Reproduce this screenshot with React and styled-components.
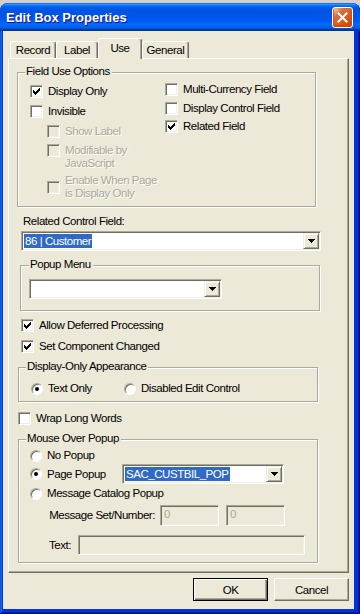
import styled, { createGlobalStyle } from 'styled-components';

const GlobalStyle = createGlobalStyle`
  html, body {
    margin: 0;
    padding: 0;
  }
  body {
    background: #d4d0c8;
    font-family: "Liberation Sans", Arial, sans-serif;
    font-size: 11.5px;
    letter-spacing: -0.45px;
    color: #000;
  }
`;

const TABS = [
  { name: 'Record', width: 46 },
  { name: 'Label', width: 42 },
  { name: 'Use', width: 44, active: true },
  { name: 'General', width: 47 },
];

function CheckMark() {
  return (
    <svg width="7" height="7" viewBox="0 0 7 7" shapeRendering="crispEdges">
      <path
        fill="#000"
        d="M0 2h1v3H0z M1 3h1v3H1z M2 4h1v3H2z M3 3h1v3H3z M4 2h1v3H4z M5 1h1v3H5z M6 0h1v3H6z"
      />
    </svg>
  );
}

function Arrow() {
  return (
    <svg width="7" height="4" viewBox="0 0 7 4" shapeRendering="crispEdges">
      <path fill="#000" d="M0 0h7v1H0z M1 1h5v1H1z M2 2h3v1H2z M3 3h1v1H3z" />
    </svg>
  );
}

function Check({ children, checked, disabled, mt = 0, ml = 0, align = 'center' }) {
  return (
    <CheckRow $mt={mt} $ml={ml} $align={align}>
      <Box $disabled={disabled}>{checked && <CheckMark />}</Box>
      <Caption $disabled={disabled}>{children}</Caption>
    </CheckRow>
  );
}

function Option({ children, selected, width, mt = 0 }) {
  return (
    <OptionRow $mt={mt} $w={width}>
      <RadioDot>{selected && <Dot />}</RadioDot>
      <Caption>{children}</Caption>
    </OptionRow>
  );
}

function Combo({ value, width }) {
  return (
    <ComboBox $w={width}>
      <ComboValue>{value && <Selected>{value}</Selected>}</ComboValue>
      <DropButton>
        <Arrow />
      </DropButton>
    </ComboBox>
  );
}

export default function App() {
  return (
    <>
      <GlobalStyle />
      <Frame>
        <TitleBar>
          <Title>Edit Box Properties</Title>
          <CloseButton>
            <svg width="11" height="11" viewBox="0 0 11 11">
              <path d="M1.5 1.5l8 8M9.5 1.5l-8 8" stroke="#fff" strokeWidth="2" strokeLinecap="square" />
            </svg>
          </CloseButton>
        </TitleBar>

        <Client>
          <TabRow>
            {TABS.map(tab => (
              <Tab key={tab.name} $w={tab.width} $active={tab.active}>
                {tab.name}
              </Tab>
            ))}
          </TabRow>

          <Panel>
            <Group $w={299} $h={135}>
              <Legend>Field Use Options</Legend>
              <GroupBody $pt={12} $pl={12}>
                <Column $w={135}>
                  <Check checked>Display Only</Check>
                  <Check mt={7}>Invisible</Check>
                  <Check disabled mt={7} ml={17}>Show Label</Check>
                  <Check disabled mt={6} ml={17} align="flex-start">
                    Modifiable by<br />JavaScript
                  </Check>
                  <Check disabled mt={4} ml={17}>
                    Enable When Page<br />is Display Only
                  </Check>
                </Column>
                <Column $mt={-2}>
                  <Check>Multi-Currency Field</Check>
                  <Check mt={6}>Display Control Field</Check>
                  <Check checked mt={5}>Related Field</Check>
                </Column>
              </GroupBody>
            </Group>

            <FieldLabel>Related Control Field:</FieldLabel>
            <ComboSlot $mt={3} $ml={4}>
              <Combo value="86 | Customer" width={300} />
            </ComboSlot>

            <Group $w={300} $h={46} $mt={14} $ml={3}>
              <Legend $x={8}>Popup Menu</Legend>
              <GroupBody $pt={13} $pl={8}>
                <Combo width={193} />
              </GroupBody>
            </Group>

            <Check checked mt={8} ml={4}>Allow Deferred Processing</Check>
            <Check checked mt={8} ml={4}>Set Component Changed</Check>

            <Group $w={300} $h={35} $mt={14} $ml={1}>
              <Legend>Display-Only Appearance</Legend>
              <GroupBody $pt={14} $pl={12}>
                <Option selected width={93}>Text Only</Option>
                <Option>Disabled Edit Control</Option>
              </GroupBody>
            </Group>

            <Check mt={10} ml={1}>Wrap Long Words</Check>

            <Group $w={300} $h={124} $mt={14} $ml={1}>
              <Legend>Mouse Over Popup</Legend>
              <GroupBody $pt={9} $pl={11} $column>
                <Option>No Popup</Option>
                <PopupRow>
                  <Option selected width={92}>Page Popup</Option>
                  <Combo value="SAC_CUSTBIL_POP" width={162} />
                </PopupRow>
                <Option mt={3}>Message Catalog Popup</Option>
                <InputRow $mt={5}>
                  <InputLabel $w={130} $right>Message Set/Number:</InputLabel>
                  <TextInput $w={59} $h={21}>0</TextInput>
                  <TextInput $w={59} $h={21} $ml={7}>0</TextInput>
                </InputRow>
                <InputRow $mt={9}>
                  <InputLabel $w={29} $ml={19}>Text:</InputLabel>
                  <TextInput $w={227} $h={20} />
                </InputRow>
              </GroupBody>
            </Group>
          </Panel>

          <ButtonRow>
            <PushButton $default>OK</PushButton>
            <PushButton>Cancel</PushButton>
          </ButtonRow>
        </Client>
      </Frame>
    </>
  );
}

const Frame = styled.div`
  margin-top: 3px;
  width: 360px;
  height: 611px;
  box-sizing: border-box;
  display: flex;
  flex-direction: column;
  background: #0831d9;
  border-radius: 8px 8px 0 0;
  overflow: hidden;
  box-shadow: inset -1px -1px #00138c, inset 1px 1px #0855dd, inset -2px -2px #001ea0,
    inset 2px 2px #166aee;
`;

const TitleBar = styled.div`
  flex: none;
  height: 28px;
  display: flex;
  align-items: center;
  padding: 0 7px 0 6px;
  border-radius: 8px 8px 0 0;
  background: linear-gradient(
    to bottom,
    #0058ee 0%,
    #3593ff 4%,
    #288eff 6%,
    #127dff 8%,
    #036ffc 10%,
    #0262ee 14%,
    #0057e5 20%,
    #0054e3 24%,
    #0055eb 56%,
    #005bf5 66%,
    #026afe 76%,
    #0062ef 86%,
    #0052d6 92%,
    #0040ab 94%,
    #003092 100%
  );
`;

const Title = styled.div`
  flex: 1;
  padding-top: 1px;
  font-size: 13px;
  font-weight: 700;
  letter-spacing: 0;
  color: #fff;
  text-shadow: 1px 1px #0f1089;
`;

const CloseButton = styled.div`
  width: 21px;
  height: 21px;
  box-sizing: border-box;
  display: flex;
  align-items: center;
  justify-content: center;
  border: 1px solid #fff;
  border-radius: 3px;
  background: radial-gradient(circle at 90% 90%, #cc4600 0%, #dc6527 55%, #cd7546 70%, #ffccb2 90%, #fff 100%);
  box-shadow: inset 0 -1px 2px 1px #da4600;
`;

const Client = styled.div`
  flex: 1;
  margin: 0 6px 5px 3px;
  padding: 7px 5px 0;
  background: #ece9d8;
  display: flex;
  flex-direction: column;
`;

const TabRow = styled.div`
  display: flex;
  align-items: flex-end;
  height: 20px;
  padding-left: 2px;
  position: relative;
  z-index: 1;
`;

const Tab = styled.div`
  width: ${p => p.$w}px;
  height: ${p => (p.$active ? 21 : 17)}px;
  margin-bottom: ${p => (p.$active ? -1 : 0)}px;
  box-sizing: border-box;
  display: flex;
  align-items: center;
  justify-content: center;
  padding-bottom: ${p => (p.$active ? 2 : 0)}px;
  background: #ece9d8;
  border-top: 1px solid #fff;
  border-left: 1px solid #fff;
  border-right: 1px solid #716f64;
  border-radius: 3px 3px 0 0;
  box-shadow: inset -1px 0 #aca899;
`;

const Panel = styled.div`
  width: 341px;
  height: 515px;
  box-sizing: border-box;
  padding: 13px 0 0 8px;
  display: flex;
  flex-direction: column;
  align-items: flex-start;
  border-top: 1px solid #fff;
  border-left: 1px solid #fff;
  border-right: 1px solid #716f64;
  border-bottom: 1px solid #716f64;
  box-shadow: inset -1px -1px #aca899;
`;

const Group = styled.div`
  position: relative;
  flex: none;
  width: ${p => p.$w}px;
  height: ${p => p.$h}px;
  margin: ${p => p.$mt || 0}px 0 0 ${p => p.$ml || 0}px;
  box-sizing: border-box;
  border: 1px solid #aca899;
  box-shadow: inset 1px 1px #fff, 1px 1px #fff;
`;

const Legend = styled.span`
  position: absolute;
  top: -8px;
  left: ${p => p.$x || 7}px;
  padding: 0 2px 0 1px;
  line-height: 13px;
  background: #ece9d8;
`;

const GroupBody = styled.div`
  display: flex;
  flex-direction: ${p => (p.$column ? 'column' : 'row')};
  align-items: flex-start;
  padding: ${p => p.$pt}px 0 0 ${p => p.$pl}px;
`;

const Column = styled.div`
  display: flex;
  flex-direction: column;
  align-items: flex-start;
  width: ${p => (p.$w ? `${p.$w}px` : 'auto')};
  margin-top: ${p => p.$mt || 0}px;
`;

const CheckRow = styled.div`
  display: flex;
  align-items: ${p => p.$align};
  gap: 5px;
  margin: ${p => p.$mt}px 0 0 ${p => p.$ml}px;
`;

const Box = styled.span`
  flex: none;
  width: 13px;
  height: 13px;
  box-sizing: border-box;
  display: flex;
  align-items: center;
  justify-content: center;
  border: 1px solid;
  border-color: #aca899 #fff #fff #aca899;
  box-shadow: inset 1px 1px #716f64, inset -1px -1px #f1efe2;
  background: ${p => (p.$disabled ? '#ece9d8' : '#fff')};
`;

const Caption = styled.span`
  line-height: 13px;
  white-space: nowrap;
  color: ${p => (p.$disabled ? '#aca899' : '#000')};
  text-shadow: ${p => (p.$disabled ? '1px 1px #fff' : 'none')};
`;

const OptionRow = styled.div`
  flex: none;
  display: flex;
  align-items: center;
  gap: 5px;
  width: ${p => (p.$w ? `${p.$w}px` : 'auto')};
  margin-top: ${p => p.$mt}px;
`;

const RadioDot = styled.span`
  flex: none;
  width: 12px;
  height: 12px;
  box-sizing: border-box;
  border-radius: 50%;
  display: flex;
  align-items: center;
  justify-content: center;
  border: 1px solid;
  border-color: #aca899 #fff #fff #aca899;
  box-shadow: inset 1px 1px #716f64;
  background: #fff;
`;

const Dot = styled.span`
  width: 4px;
  height: 4px;
  border-radius: 50%;
  background: #000;
`;

const FieldLabel = styled.div`
  margin: 8px 0 0 6px;
  line-height: 13px;
`;

const ComboSlot = styled.div`
  margin: ${p => p.$mt}px 0 0 ${p => p.$ml}px;
`;

const ComboBox = styled.div`
  flex: none;
  width: ${p => p.$w}px;
  height: 20px;
  box-sizing: border-box;
  display: flex;
  align-items: center;
  border: 1px solid;
  border-color: #aca899 #fff #fff #aca899;
  box-shadow: inset 1px 1px #716f64, inset -1px -1px #f1efe2;
  background: #fff;
  padding: 1px;
`;

const ComboValue = styled.div`
  flex: 1;
  display: flex;
  padding-left: 1px;
`;

const Selected = styled.span`
  background: #316ac5;
  color: #fff;
  line-height: 14px;
  padding: 0 1px;
`;

const DropButton = styled.div`
  flex: none;
  width: 16px;
  height: 16px;
  box-sizing: border-box;
  display: flex;
  align-items: center;
  justify-content: center;
  background: #ece9d8;
  border: 1px solid;
  border-color: #f1efe2 #716f64 #716f64 #f1efe2;
  box-shadow: inset 1px 1px #fff, inset -1px -1px #aca899;
`;

const PopupRow = styled.div`
  display: flex;
  align-items: center;
  margin-top: 2px;
`;

const InputRow = styled.div`
  display: flex;
  align-items: center;
  margin-top: ${p => p.$mt}px;
`;

const InputLabel = styled.span`
  flex: none;
  width: ${p => p.$w}px;
  margin-left: ${p => p.$ml || 0}px;
  box-sizing: border-box;
  padding-right: ${p => (p.$right ? 5 : 0)}px;
  text-align: ${p => (p.$right ? 'right' : 'left')};
  line-height: 13px;
  white-space: nowrap;
`;

const TextInput = styled.div`
  flex: none;
  width: ${p => p.$w}px;
  height: ${p => p.$h}px;
  margin-left: ${p => p.$ml || 0}px;
  box-sizing: border-box;
  padding: 2px 0 0 3px;
  line-height: 13px;
  color: #aca899;
  background: #ece9d8;
  border: 1px solid;
  border-color: #aca899 #fff #fff #aca899;
  box-shadow: inset 1px 1px #716f64, inset -1px -1px #f1efe2;
`;

const ButtonRow = styled.div`
  display: flex;
  justify-content: flex-end;
  gap: 6px;
  margin-top: 5px;
`;

const PushButton = styled.div`
  width: 75px;
  height: 23px;
  box-sizing: border-box;
  display: flex;
  align-items: center;
  justify-content: center;
  background: #ece9d8;
  border: 1px solid;
  border-color: ${p => (p.$default ? '#000' : '#fff #716f64 #716f64 #fff')};
  box-shadow: ${p =>
    p.$default
      ? 'inset 1px 1px #fff, inset -1px -1px #716f64, inset -2px -2px #aca899'
      : 'inset -1px -1px #aca899'};
`;
